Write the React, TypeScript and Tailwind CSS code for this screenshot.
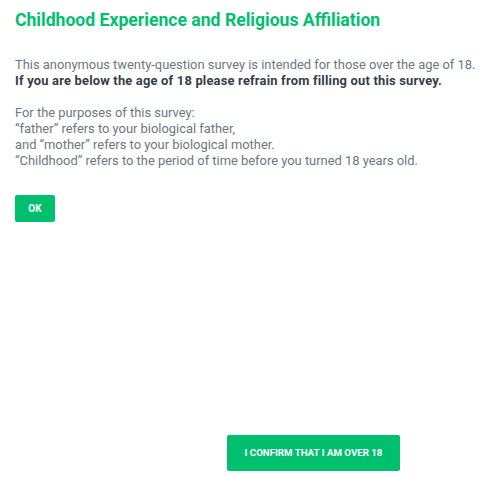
export default function App() {
  return (
    <div className="relative h-[477px] w-[498px] bg-white font-['Roboto',sans-serif]">
      <div className="px-[15px] pt-[9px]">
        <h1 className="text-[17.6px] font-bold leading-[22px] text-[#00bf6f]">
          Childhood Experience and Religious Affiliation
        </h1>
        <div className="mt-[26px] text-[12.9px] leading-[16px] text-[#6b787f]">
          <p>This anonymous twenty-question survey is intended for those over the age of 18.</p>
          <p className="font-bold tracking-[0.2px] text-[#333e48]">
            If you are below the age of 18 please refrain from filling out this survey.
          </p>
          <p className="mt-[16px]">For the purposes of this survey:</p>
          <p>“father” refers to your biological father,</p>
          <p>and “mother” refers to your biological mother.</p>
          <p>“Childhood” refers to the period of time before you turned 18 years old.</p>
        </div>
        <button className="mt-[26px] h-[27px] w-[40px] rounded-[2px] bg-[#00bf6f] text-[10px] font-bold text-white">
          OK
        </button>
      </div>
      <div className="absolute left-[227px] top-[435px]">
        <button className="h-[36px] w-[173px] rounded-[2px] bg-[#00bf6f] text-[9.7px] font-bold text-white">
          I CONFIRM THAT I AM OVER 18
        </button>
      </div>
    </div>
  );
}
